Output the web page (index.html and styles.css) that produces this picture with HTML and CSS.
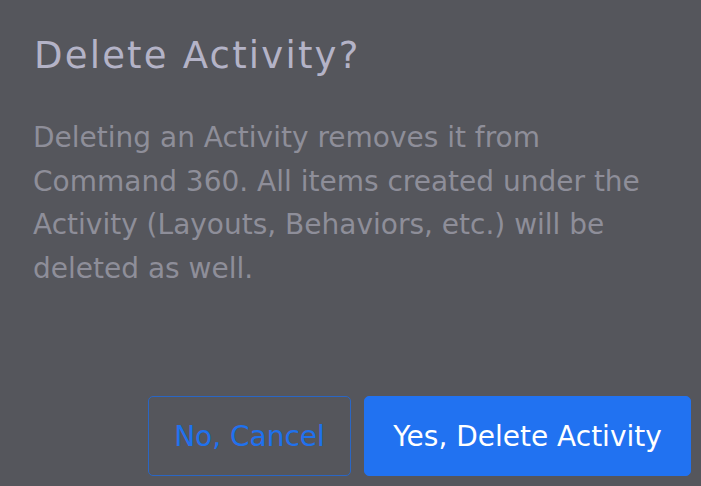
FILE: index.html
```html
<!DOCTYPE html>
<html lang="en">
<head>
    <meta charset="UTF-8">
    <meta name="viewport" content="width=device-width, initial-scale=1.0">
    <title>Delete Activity</title>
    <link rel="stylesheet" href="styles.css">
</head>
<body>
<div class="dialog">
    <h1 class="dialog-title">Delete Activity?</h1>
    <p class="dialog-text">
        Deleting an Activity removes it from Command 360. All items created under the
        Activity (Layouts, Behaviors, etc.) will be deleted as well.
    </p>
    <div class="dialog-actions">
        <button type="button" class="btn btn-outline">No, Cancel</button>
        <button type="button" class="btn btn-primary">Yes, Delete Activity</button>
    </div>
</div>
</body>
</html>
```

FILE: styles.css
```css
body {
    margin: 0;
    background-color: #55565c;
    font-family: "DejaVu Sans", Arial, sans-serif;
}
.dialog {
    padding: 34px 10px 0 33px;
    height: 486px;
    box-sizing: border-box;
}
.dialog-title {
    margin: 0 0 0 1px;
    font-size: 37px;
    font-weight: normal;
    line-height: 44px;
    letter-spacing: 2.2px;
    color: #b4b3c7;
}
.dialog-text {
    margin: 38px 0 0;
    max-width: 625px;
    font-size: 28px;
    line-height: 43.5px;
    color: #8e8e99;
}
.dialog-actions {
    display: flex;
    justify-content: flex-end;
    gap: 13px;
    margin-top: 106px;
}
.btn {
    height: 80px;
    padding: 0;
    font-family: inherit;
    font-size: 28px;
    border-radius: 5px;
    cursor: pointer;
}
.btn-outline {
    width: 203px;
    background: transparent;
    border: 1px solid #2a66c4;
    color: #2071ee;
}
.btn-primary {
    width: 327px;
    background-color: #2172f1;
    border: 1px solid #2172f1;
    color: #ffffff;
}
```
